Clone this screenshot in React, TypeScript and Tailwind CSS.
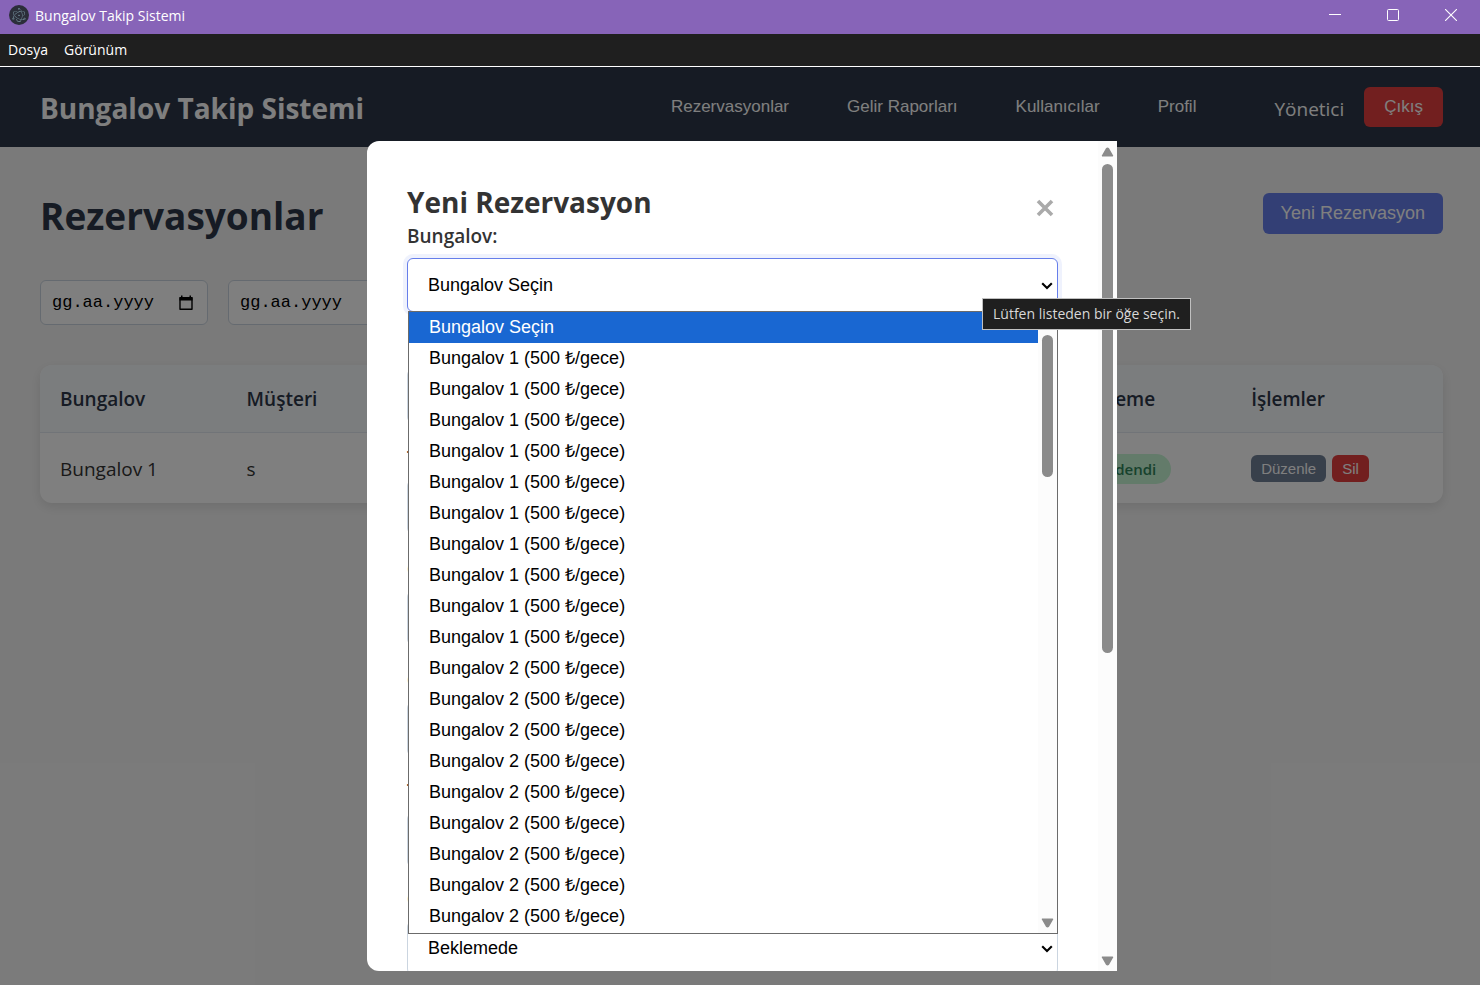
import React from "react";
import { SiElectron } from "react-icons/si";

const SANS = "font-['Open_Sans','Noto_Sans',sans-serif]";
const ARIAL = "font-['Liberation_Sans',Arial,sans-serif]";

function AppIcon() {
  return (
    <span className="flex size-5 items-center justify-center rounded-full bg-[#2b2e3a]">
      <SiElectron size={14} color="#93b8c4" aria-hidden="true" />
    </span>
  );
}

function TitleBar() {
  return (
    <div className="flex h-[34px] items-center bg-[#8764b8] pb-1 pl-[9px] text-white">
      <AppIcon />
      <span className="ml-1.5 flex-1 text-[14px]">Bungalov Takip Sistemi</span>
      <button aria-label="Simge durumuna küçült" className="flex h-[30px] w-[58px] items-center justify-center">
        <svg width="12" height="12" viewBox="0 0 12 12"><path d="M0 5.5H12" stroke="#fff" /></svg>
      </button>
      <button aria-label="Ekranı kapla" className="flex h-[30px] w-[58px] items-center justify-center">
        <svg width="12" height="12" viewBox="0 0 12 12"><rect x="0.5" y="0.5" width="11" height="11" rx="1" fill="none" stroke="#fff" /></svg>
      </button>
      <button aria-label="Kapat" className="flex h-[30px] w-[58px] items-center justify-center">
        <svg width="12" height="12" viewBox="0 0 12 12"><path d="M0 0L12 12M12 0L0 12" stroke="#fff" strokeWidth="1.1" /></svg>
      </button>
    </div>
  );
}

function MenuBar() {
  return (
    <div className="flex h-[33px] items-center gap-4 border-b border-white bg-[#1f1f1f] px-2 pb-0.5 text-[14px] text-white">
      <button>Dosya</button>
      <button>Görünüm</button>
    </div>
  );
}

const NAV = ["Rezervasyonlar", "Gelir Raporları", "Kullanıcılar", "Profil"];

function Header() {
  return (
    <header className="flex h-20 items-center justify-between bg-[#2d3748] pr-[37px] pl-10 text-white">
      <div className="pt-0.5 text-[28px] font-bold">Bungalov Takip Sistemi</div>
      <div className="flex items-center">
        <nav className={`flex gap-[18px] text-[17px] ${ARIAL}`}>
          {NAV.map((n) => (
            <button key={n} className="h-10 px-5">{n}</button>
          ))}
        </nav>
        <span className="ml-[58px] pt-1 text-[19px]">Yönetici</span>
        <button className={`ml-5 h-10 rounded-md bg-[#e53e3e] px-5 text-[17px] ${ARIAL}`}>Çıkış</button>
      </div>
    </header>
  );
}

function DateField({ label }: { label: string }) {
  return (
    <div className="flex h-[45px] w-[168px] items-center rounded-md border border-[#cbd5e0] bg-white pr-3.5 pl-[11px]">
      <input
        aria-label={label}
        placeholder="gg.aa.yyyy"
        className="w-full min-w-0 bg-transparent font-['Liberation_Mono',monospace] text-[17px] text-black outline-none placeholder:text-black"
      />
      <svg width="14" height="16" viewBox="0 0 14 16" className="shrink-0" aria-hidden="true">
        <path d="M1 3h12v11.3H1z" fill="none" stroke="#000" strokeWidth="1.4" strokeLinejoin="round" />
        <path d="M0.5 2h13v3.5h-13zM2 0.5h1.5v2H2zM10.5 0.5H12v2h-1.5z" fill="#000" />
      </svg>
    </div>
  );
}

function Table() {
  const th = "px-5 pt-0.5 text-left font-semibold text-[#2d3748]";
  return (
    <div className="mt-10 overflow-hidden rounded-xl bg-white shadow-[0_4px_12px_rgba(0,0,0,0.1)]">
      <table className="w-full table-fixed text-[19px]">
        <colgroup>
          <col className="w-[13.3%]" />
          <col className="w-[12%]" />
          <col className="w-[12%]" />
          <col className="w-[12%]" />
          <col className="w-[12%]" />
          <col className="w-[12%]" />
          <col className="w-[11.6%]" />
          <col className="w-[15.1%]" />
        </colgroup>
        <thead>
          <tr className="h-[67px] border-b border-[#e2e8f0] bg-[#f7fafc]">
            {["Bungalov", "Müşteri", "Telefon", "Giriş", "Çıkış", "Tutar", "Ödeme", "İşlemler"].map((h) => (
              <th key={h} className={th}>{h}</th>
            ))}
          </tr>
        </thead>
        <tbody>
          <tr className="h-[71px] text-[#333]">
            <td className="px-5 pt-0.5">Bungalov 1</td>
            <td className="px-5 pt-0.5">s</td>
            <td /><td /><td /><td />
            <td className="px-5 pt-0.5">
              <span className="inline-block rounded-full bg-[#c6f6d5] px-[15px] text-[15px] leading-[30px] font-semibold text-[#2f855a]">Ödendi</span>
            </td>
            <td className={`px-5 pt-0.5 text-[15px] text-white ${ARIAL}`}>
              <div className="flex gap-1.5">
                <button className="h-[27px] rounded-md bg-[#718096] px-2.5">Düzenle</button>
                <button className="h-[27px] rounded-md bg-[#e53e3e] px-2.5">Sil</button>
              </div>
            </td>
          </tr>
        </tbody>
      </table>
    </div>
  );
}

const OPTIONS = [
  "Bungalov Seçin",
  ...Array.from({ length: 10 }, () => "Bungalov 1 (500 ₺/gece)"),
  ...Array.from({ length: 9 }, () => "Bungalov 2 (500 ₺/gece)"),
];

function Arrow({ down }: { down?: boolean }) {
  return (
    <svg width="13" height="10" viewBox="0 0 13 10" className="shrink-0" aria-hidden="true">
      <path
        d={down ? "M1.5 1.2h10L7.5 8.2Q6.5 9.2 5.5 8.2z" : "M1.5 8.8h10L7.5 1.8Q6.5 0.8 5.5 1.8z"}
        fill="#8b8b8b" stroke="#8b8b8b" strokeWidth="1.5" strokeLinejoin="round"
      />
    </svg>
  );
}

function Chevron() {
  return (
    <svg width="12" height="8" viewBox="0 0 12 8" className="pointer-events-none absolute top-6 right-[5px]" aria-hidden="true">
      <path d="M1.2 1.2L6 6L10.8 1.2" fill="none" stroke="#000" strokeWidth="2.1" />
    </svg>
  );
}

function OptionList() {
  return (
    <div className={`absolute top-[53px] right-0 left-px z-10 flex border border-[#6b6b6b] bg-white text-[18px] text-black ${ARIAL}`}>
      <ul role="listbox" aria-label="Bungalovlar" className="flex-1 pb-px">
        {OPTIONS.map((o, i) => (
          <li
            key={i}
            role="option"
            aria-selected={i === 0}
            className={i === 0 ? "h-[31px] bg-[#1967d2] pl-5 leading-[30px] text-white" : "h-[31px] pl-5 leading-[30px]"}
          >
            {o}
          </li>
        ))}
      </ul>
      <div className="flex w-[19px] flex-col items-center bg-[#fcfcfc] py-[5px]">
        <Arrow />
        <div className="mt-2 h-[142px] w-[11px] rounded-full bg-[#8b8b8b]" />
        <div className="flex-1" />
        <Arrow down />
      </div>
    </div>
  );
}

const FIELDS = [
  { id: "musteri", label: "Müşteri Adı:" },
  { id: "telefon", label: "Telefon:" },
  { id: "giris", label: "Giriş Tarihi:" },
  { id: "cikis", label: "Çıkış Tarihi:" },
  { id: "tutar", label: "Toplam Tutar:" },
];

const LABEL = "block h-10 text-[19px] leading-[36px] font-semibold text-[#333]";
const CONTROL = "block h-[54px] w-full appearance-none rounded-md border bg-white px-5 text-[18px] text-black outline-none";

function Modal() {
  return (
    <div role="dialog" aria-label="Yeni Rezervasyon" className="flex h-full w-[750px] overflow-hidden rounded-l-xl bg-white">
      <div className="flex-1 overflow-hidden px-10 pt-[45px]">
        <div className="flex h-8 items-center justify-between">
          <h2 className="text-[28px] leading-8 font-bold text-[#333]">Yeni Rezervasyon</h2>
          <button aria-label="Formu kapat" className="mt-3 mr-1">
            <svg width="18" height="18" viewBox="0 0 18 18"><path d="M2 2L16 16M16 2L2 16" stroke="#aaa" strokeWidth="3.6" /></svg>
          </button>
        </div>
        <form>
          <label htmlFor="bungalov" className={LABEL}>Bungalov:</label>
          <div className="relative">
            <select id="bungalov" className={`${CONTROL} border-[#667eea] shadow-[0_0_0_4px_rgba(102,126,234,0.1)] ${ARIAL}`}>
              <option>Bungalov Seçin</option>
            </select>
            <Chevron />
            <OptionList />
          </div>
          {FIELDS.map((f) => (
            <div key={f.id} className="mt-[17px]">
              <label htmlFor={f.id} className={LABEL}>{f.label}</label>
              <input id={f.id} className={`${CONTROL} border-[#cbd5e0] ${ARIAL}`} />
            </div>
          ))}
          <div className="mt-3.5">
            <label htmlFor="odeme" className={LABEL}>Ödeme Durumu:</label>
            <div className="relative">
              <select id="odeme" className={`${CONTROL} border-[#cbd5e0] ${ARIAL}`}>
                <option>Beklemede</option>
              </select>
              <Chevron />
            </div>
          </div>
        </form>
      </div>
      <div className="flex w-[19px] shrink-0 flex-col items-center bg-[#fcfcfc] pt-1.5 pb-[5px]">
        <Arrow />
        <div className="mt-[7px] h-[489px] w-[11px] rounded-full bg-[#8b8b8b]" />
        <div className="flex-1" />
        <Arrow down />
      </div>
    </div>
  );
}

export default function App() {
  return (
    <div className={`flex h-screen flex-col overflow-hidden ${SANS}`}>
      <TitleBar />
      <MenuBar />
      <div className="relative flex-1 bg-[#f5f5f5]">
        <Header />
        <main className="pt-10 pr-[37px] pl-10">
          <div className="flex h-[53px] items-center justify-between">
            <h1 className="pt-1 text-[37px] font-bold text-[#2d3748]">Rezervasyonlar</h1>
            <button className={`h-[41px] rounded-md bg-[#667eea] px-[18px] text-[18px] text-white ${ARIAL}`}>Yeni Rezervasyon</button>
          </div>
          <div className="mt-10 flex gap-5">
            <DateField label="Başlangıç tarihi" />
            <DateField label="Bitiş tarihi" />
          </div>
          <Table />
        </main>
        <div className="absolute inset-0 flex justify-center bg-black/50 pt-[74px] pb-3.5 pl-1">
          <Modal />
        </div>
        <div role="tooltip" className="absolute top-[231px] left-[982px] z-20 border border-[#c0c0c0] bg-[#1f1f1f] px-2.5 text-[14px] leading-[30px] whitespace-nowrap text-[#d8d8d8]">
          Lütfen listeden bir öğe seçin.
        </div>
      </div>
    </div>
  );
}
